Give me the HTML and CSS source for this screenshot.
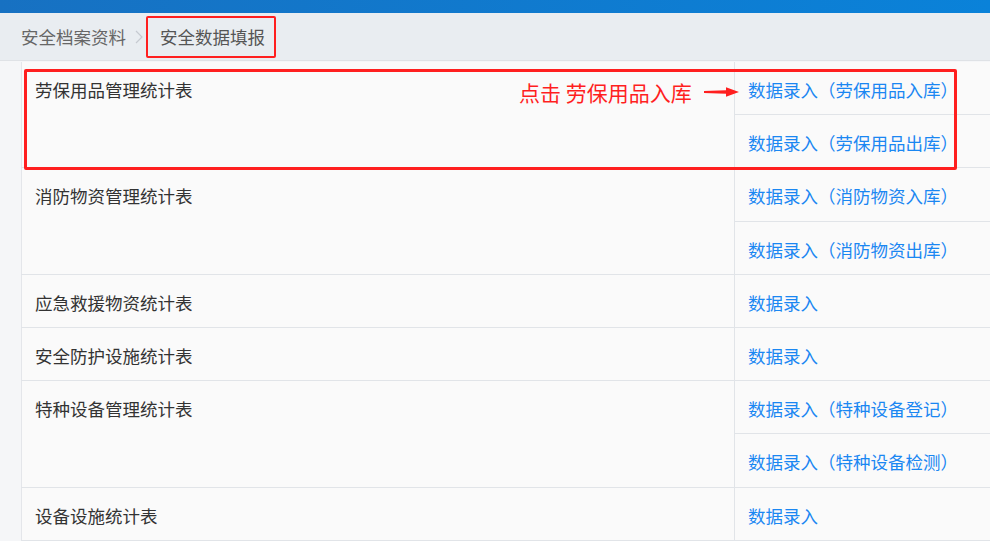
FILE: index.html
```html
<!DOCTYPE html>
<html lang="zh-CN">
<head>
  <meta charset="UTF-8">
  <title>安全数据填报</title>
  <link rel="stylesheet" href="styles.css">
</head>
<body>
  <div class="topbar"></div>

  <div class="crumbs">
    <span class="crumb">安全档案资料</span>
    <svg class="sep" width="10" height="14" viewBox="0 0 10 14"><path d="M2 1 L8 7 L2 13" fill="none" stroke="#c6cad1" stroke-width="1.2"/></svg>
    <span class="crumb current">安全数据填报</span>
  </div>

  <div class="content">
    <table class="grid">
      <tr>
        <td class="name" rowspan="2">劳保用品管理统计表</td>
        <td class="entry"><a href="#">数据录入（劳保用品入库）</a></td>
      </tr>
      <tr>
        <td class="entry"><a href="#">数据录入（劳保用品出库）</a></td>
      </tr>
      <tr>
        <td class="name" rowspan="2">消防物资管理统计表</td>
        <td class="entry"><a href="#">数据录入（消防物资入库）</a></td>
      </tr>
      <tr>
        <td class="entry"><a href="#">数据录入（消防物资出库）</a></td>
      </tr>
      <tr>
        <td class="name">应急救援物资统计表</td>
        <td class="entry"><a href="#">数据录入</a></td>
      </tr>
      <tr>
        <td class="name">安全防护设施统计表</td>
        <td class="entry"><a href="#">数据录入</a></td>
      </tr>
      <tr>
        <td class="name" rowspan="2">特种设备管理统计表</td>
        <td class="entry"><a href="#">数据录入（特种设备登记）</a></td>
      </tr>
      <tr>
        <td class="entry"><a href="#">数据录入（特种设备检测）</a></td>
      </tr>
      <tr>
        <td class="name">设备设施统计表</td>
        <td class="entry"><a href="#">数据录入</a></td>
      </tr>
    </table>

    <!-- annotation overlay -->
    <div class="mark-box"></div>
    <div class="mark-text">点击 劳保用品入库</div>
    <svg class="mark-arrow" width="36" height="12" viewBox="0 0 36 12">
      <polygon points="0,5 22,4.3 22,1.2 35,6 22,10.8 22,7.7 0,7" fill="#ff1f1f"/>
    </svg>
  </div>
</body>
</html>
```

FILE: styles.css
```css
body {
  margin: 0;
  background-color: #f5f6f8;
  font-family: "Noto Sans CJK SC", "Noto Sans", sans-serif;
  color: #333;
  overflow: hidden;
}
.topbar {
  height: 13px;
  background: linear-gradient(90deg, #1771c2, #0a82d9);
}
.crumbs {
  height: 47px;
  border-bottom: 1px solid #dfe2e6;
  background-color: #e9edf1;
  display: flex;
  align-items: center;
  padding-left: 21px;
  font-size: 17.5px;
}
.crumb {
  color: #666;
  line-height: 24px;
}
.sep {
  margin: 0 0 0 8px;
}
.crumb.current {
  color: #555;
  margin-left: 16px;
  position: relative;
}
.crumb.current::after {
  content: "";
  position: absolute;
  left: -14px;
  right: -11px;
  top: -9px;
  bottom: -9px;
  border: 2px solid #ff1f1f;
  border-radius: 2px;
}
.content {
  position: relative;
  margin-left: 21px;
  margin-top: 1px;
}
.grid {
  width: 969px;
  border-collapse: collapse;
  background-color: #fafafa;
  border-left: 1px solid #e4e6ea;
  font-size: 17.5px;
}
.grid td {
  border-bottom: 1px solid #e1e4e8;
  padding: 18px 13px 14px 13px;
  line-height: 20px;
  height: 20.2px;
  white-space: nowrap;
}
.grid td.name {
  width: 686px;
  vertical-align: top;
  border-right: 1px solid #e1e4e8;
  color: #333;
}
.grid td.entry a {
  color: #1a87f2;
  text-decoration: none;
}
.mark-box {
  position: absolute;
  left: 3px;
  top: 7px;
  width: 927px;
  height: 95px;
  border: 3px solid #ff1f1f;
  border-radius: 2px;
}
.mark-text {
  position: absolute;
  left: 498px;
  top: 16px;
  font-size: 21px;
  line-height: 28px;
  color: #ff1f1f;
}
.mark-arrow {
  position: absolute;
  left: 683px;
  top: 24px;
}
```
